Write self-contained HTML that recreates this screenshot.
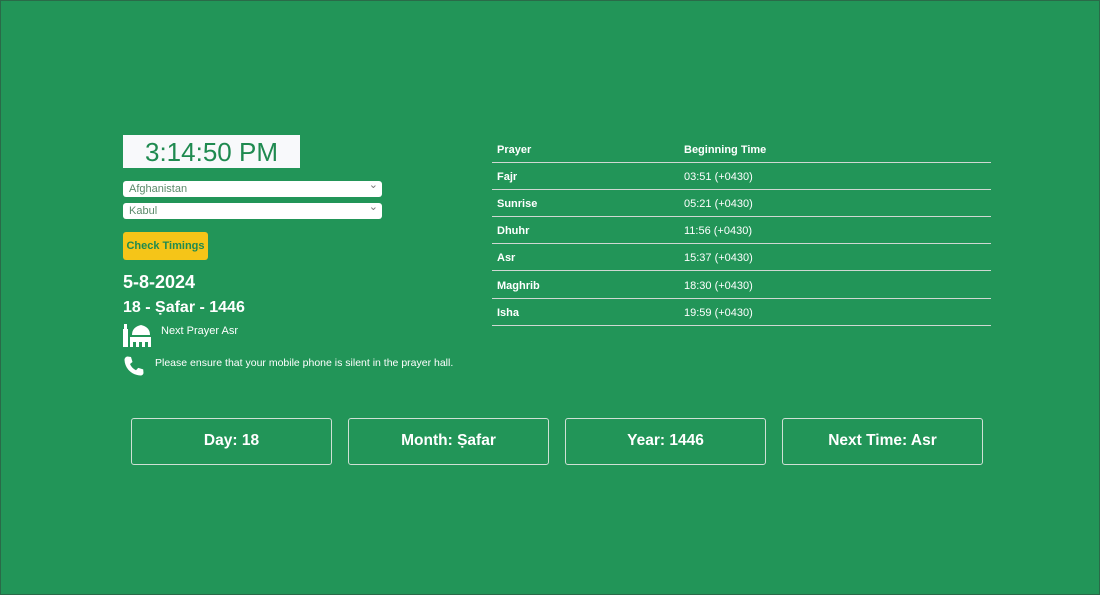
<!DOCTYPE html><html><head><style>
*{box-sizing:border-box;margin:0;padding:0}
body{width:1100px;height:595px;background:#229558;font-family:"Liberation Sans",sans-serif;color:#fff;position:relative;overflow:hidden}
.a{position:absolute}
.frame{left:0;top:0;width:1100px;height:595px;border:1px solid #2a6a48}
.clock{left:123px;top:135px;width:177px;height:33px;background:#f8f9fb;color:#1f8a50;font-size:26px;text-align:center;line-height:35px}
.sel{left:123px;width:259px;height:16px;background:#fff;border-radius:3px;color:#5a8a6a;font-size:11px;line-height:16px;padding-left:6px}
.sel:after{content:"⌄";position:absolute;right:4px;top:-4px;color:#777;font-size:11px}
.btn{left:123px;top:232px;width:85px;height:28px;background:#f5c518;border-radius:3px;color:#1f8a50;font-weight:bold;font-size:11px;line-height:28px;text-align:center}
.tl{left:492px;width:499px;height:1px;background:#cfd8d2}
.tr{left:497px;font-size:11px;font-weight:bold}
.tt{left:684px;font-size:11px}
.box{top:418px;width:201px;height:47px;border:1px solid #cfe0d5;border-radius:3px;font-size:15.5px;font-weight:bold;text-align:center;line-height:44px}
</style></head><body>
<div class="a frame"></div>
<div class="a clock">3:14:50 PM</div>
<div class="a sel" style="top:181px">Afghanistan</div>
<div class="a sel" style="top:203px">Kabul</div>
<div class="a btn">Check Timings</div>
<div class="a" style="left:123px;top:272px;font-size:18px;font-weight:bold">5-8-2024</div>
<div class="a" style="left:123px;top:299px;font-size:16px;font-weight:bold">18 - Ṣafar - 1446</div>
<svg class="a" style="left:123px;top:323px" width="28" height="24" viewBox="0 0 28 24" fill="#fff"><rect x="0" y="6" width="5" height="18"/><rect x="1" y="1" width="3" height="5"/><path d="M9 12 Q9 4 18 2 Q27 4 27 12Z"/><path d="M7 14h21v10h-3v-5h-3v5h-3v-5h-3v5h-3v-5h-3v5h-3z"/></svg>
<div class="a" style="left:161px;top:325px;font-size:11px">Next Prayer Asr</div>
<svg class="a" style="left:122px;top:355px" width="24" height="24" viewBox="0 0 24 24" fill="#fff"><path d="M5.5 1.5l3.5 0.5 1.5 5-2.5 2c1.2 2.8 3.4 5 6 6.3l2.2-2.4 5 1.5 0.3 3.6c-0.2 1.5-1.5 2.5-3 2.5C9.5 20 3 13.5 2.5 5c0-1.8 1.2-3.3 3-3.5z"/></svg>
<div class="a" style="left:155px;top:357px;font-size:10.5px">Please ensure that your mobile phone is silent in the prayer hall.</div>
<div class="a tr" style="top:144px">Prayer</div><div class="a tr" style="left:684px;top:144px">Beginning Time</div>
<div class="a tl" style="top:162px"></div>
<div class="a tr" style="top:171px">Fajr</div><div class="a tt" style="top:171px">03:51 (+0430)</div>
<div class="a tl" style="top:189px"></div>
<div class="a tr" style="top:198px">Sunrise</div><div class="a tt" style="top:198px">05:21 (+0430)</div>
<div class="a tl" style="top:216px"></div>
<div class="a tr" style="top:225px">Dhuhr</div><div class="a tt" style="top:225px">11:56 (+0430)</div>
<div class="a tl" style="top:243px"></div>
<div class="a tr" style="top:252px">Asr</div><div class="a tt" style="top:252px">15:37 (+0430)</div>
<div class="a tl" style="top:270px"></div>
<div class="a tr" style="top:280px">Maghrib</div><div class="a tt" style="top:280px">18:30 (+0430)</div>
<div class="a tl" style="top:298px"></div>
<div class="a tr" style="top:307px">Isha</div><div class="a tt" style="top:307px">19:59 (+0430)</div>
<div class="a tl" style="top:325px"></div>
<div class="a box" style="left:131px">Day: 18</div>
<div class="a box" style="left:348px">Month: Ṣafar</div>
<div class="a box" style="left:565px">Year: 1446</div>
<div class="a box" style="left:782px">Next Time: Asr</div>
</body></html>
